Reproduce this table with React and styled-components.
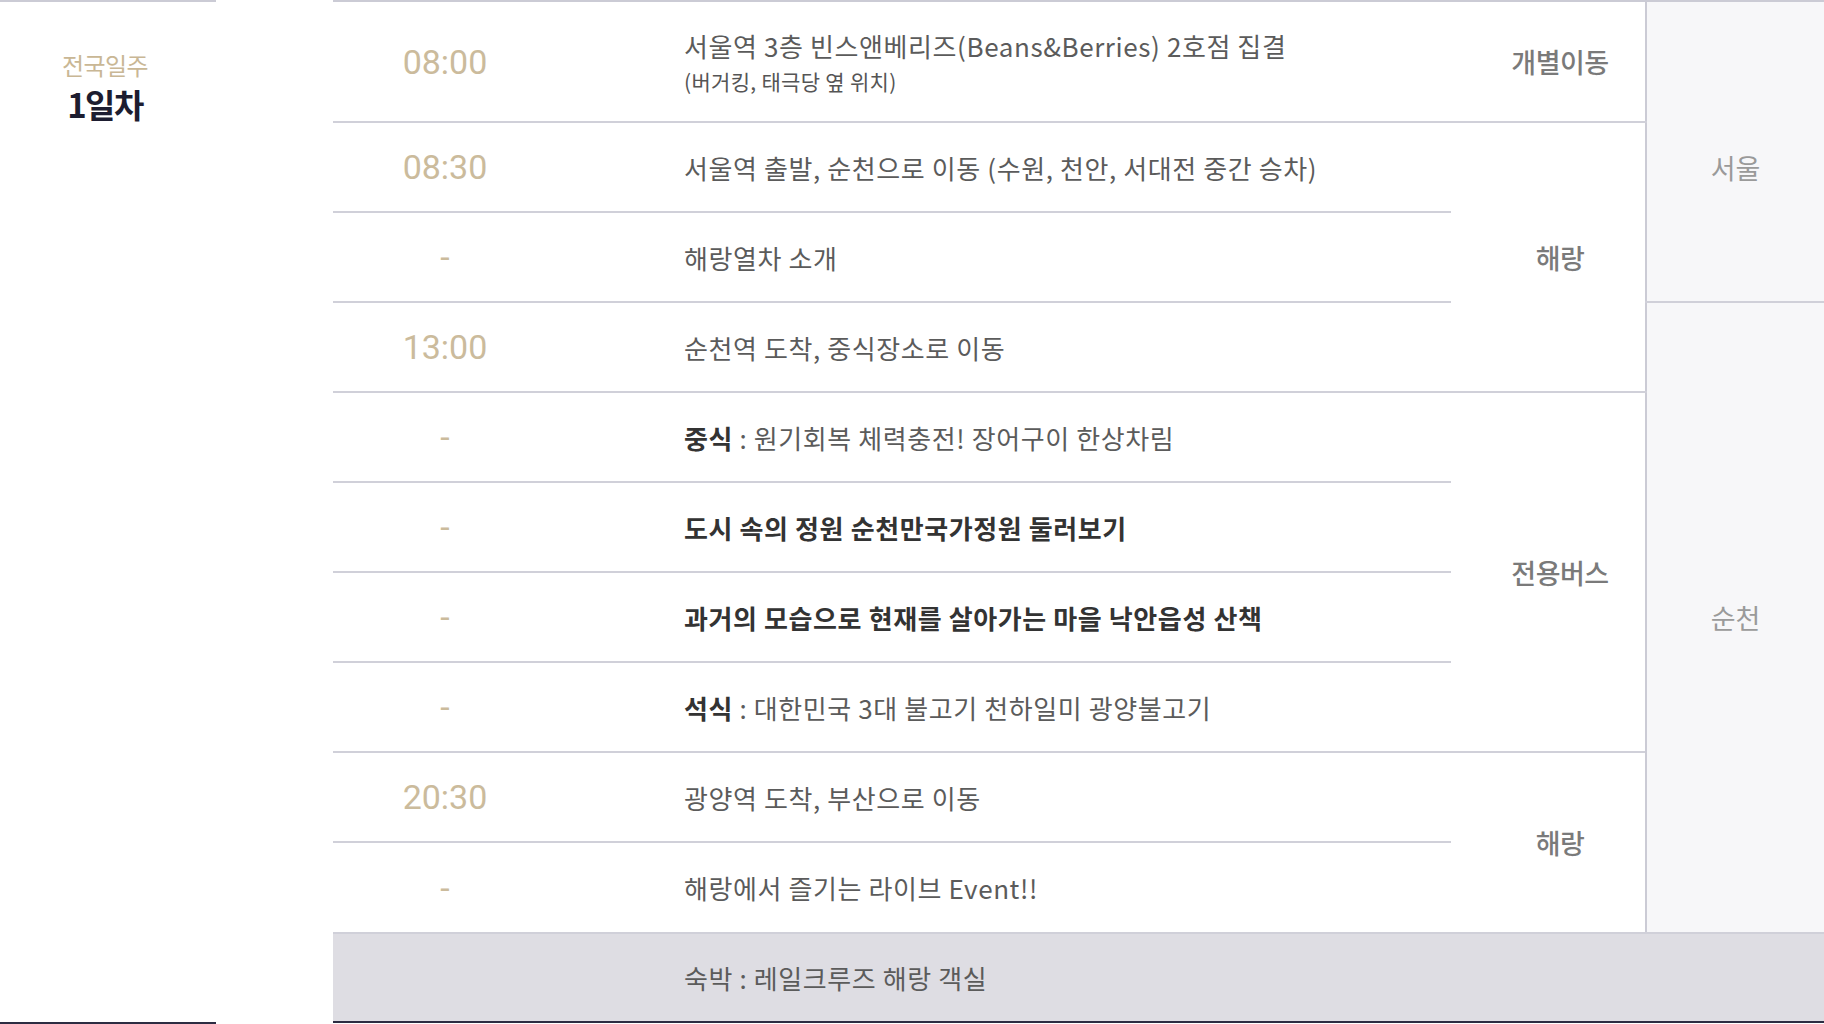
import React from 'react'
import styled, { createGlobalStyle } from 'styled-components'

const GlobalStyle = createGlobalStyle`
    html, body {
        margin: 0;
        padding: 0;
        background: #ffffff;
        overflow: hidden;
    }
    body {
        font-family: "Noto Sans CJK KR", "Noto Sans", sans-serif;
    }
`

const Page = styled.div`
    display: flex;
    width: 1824px;
    height: 1024px;
`

const DayColumn = styled.div`
    width: 216px;
    box-sizing: border-box;
    border-top: 2px solid #cbcbd5;
    border-bottom: 2px solid #2c2c42;
    display: flex;
    flex-direction: column;
    align-items: center;
    padding: 47px 6px 0 0;
`

const DayLabel = styled.div`
    font-size: 24px;
    color: #c9b795;
    letter-spacing: -0.6px;
    line-height: 32px;
`

const DayTitle = styled.div`
    font-size: 33px;
    font-weight: 700;
    color: #1d1d30;
    letter-spacing: -1.5px;
    line-height: 42px;
    margin-top: 2px;
`

const Schedule = styled.div`
    flex: 1;
    margin-left: 117px;
`

const Table = styled.table`
    width: 100%;
    border-collapse: collapse;
    table-layout: fixed;
    border-top: 2px solid #cbcbd5;
    border-bottom: 2px solid #2c2c42;
`

const Row = styled.tr`
    height: ${props => props.h}px;
`

const TimeCell = styled.td`
    width: 224px;
    padding: 0;
    text-align: center;
    vertical-align: middle;
    font-family: Roboto, "Noto Sans", sans-serif;
    font-size: 34px;
    color: #cbbb9c;
    border-bottom: 2px solid #d0d0d9;
`

const DescCell = styled.td`
    padding: 0 0 0 127px;
    vertical-align: middle;
    font-size: 26px;
    color: #5b5b5b;
    letter-spacing: 0.6px;
    border-bottom: 2px solid #d0d0d9;
    font-weight: ${props => (props.bold ? 700 : 400)};
    ${props => props.bold && 'color: #333333;'}
`

const Strong = styled.b`
    font-weight: 700;
    color: #333333;
`

const SubNote = styled.div`
    font-size: 21px;
    letter-spacing: 0.3px;
    color: #555555;
    margin-top: 2px;
`

const TransportCell = styled.td`
    width: 170px;
    padding: 0 0 0 24px;
    text-align: center;
    vertical-align: middle;
    font-size: 27px;
    font-weight: 500;
    color: #7a7a7a;
    letter-spacing: -0.5px;
    border-bottom: 2px solid #d0d0d9;
`

const RegionCell = styled.td`
    width: 177px;
    padding: ${props => props.offset || 0}px 0 0 0;
    text-align: center;
    vertical-align: middle;
    font-size: 27px;
    color: #9a9a9a;
    background: #f7f7f9;
    border-left: 2px solid #cbcbd5;
    border-bottom: 2px solid #d0d0d9;
`

const StayRow = styled.tr`
    height: ${props => props.h}px;
    background: #dedde3;
`

const StayCell = styled.td`
    padding: 0 0 0 351px;
    vertical-align: middle;
    font-size: 26px;
    color: #5b5b5b;
    letter-spacing: 0.6px;
`

const App = () => {
  return (
    <>
      <GlobalStyle />
      <Page>
        <DayColumn>
          <DayLabel>전국일주</DayLabel>
          <DayTitle>1일차</DayTitle>
        </DayColumn>
        <Schedule>
          <Table>
            <tbody>
              <Row h={121}>
                <TimeCell>08:00</TimeCell>
                <DescCell>
                  서울역 3층 빈스앤베리즈(Beans&amp;Berries) 2호점 집결
                  <SubNote>(버거킹, 태극당 옆 위치)</SubNote>
                </DescCell>
                <TransportCell>개별이동</TransportCell>
                <RegionCell rowSpan={3} offset={32}>서울</RegionCell>
              </Row>
              <Row h={90}>
                <TimeCell>08:30</TimeCell>
                <DescCell>서울역 출발, 순천으로 이동 (수원, 천안, 서대전 중간 승차)</DescCell>
                <TransportCell rowSpan={3}>해랑</TransportCell>
              </Row>
              <Row h={90}>
                <TimeCell>-</TimeCell>
                <DescCell>해랑열차 소개</DescCell>
              </Row>
              <Row h={90}>
                <TimeCell>13:00</TimeCell>
                <DescCell>순천역 도착, 중식장소로 이동</DescCell>
                <RegionCell rowSpan={7}>순천</RegionCell>
              </Row>
              <Row h={90}>
                <TimeCell>-</TimeCell>
                <DescCell><Strong>중식</Strong> : 원기회복 체력충전! 장어구이 한상차림</DescCell>
                <TransportCell rowSpan={4}>전용버스</TransportCell>
              </Row>
              <Row h={90}>
                <TimeCell>-</TimeCell>
                <DescCell bold>도시 속의 정원 순천만국가정원 둘러보기</DescCell>
              </Row>
              <Row h={90}>
                <TimeCell>-</TimeCell>
                <DescCell bold>과거의 모습으로 현재를 살아가는 마을 낙안읍성 산책</DescCell>
              </Row>
              <Row h={90}>
                <TimeCell>-</TimeCell>
                <DescCell><Strong>석식</Strong> : 대한민국 3대 불고기 천하일미 광양불고기</DescCell>
              </Row>
              <Row h={90}>
                <TimeCell>20:30</TimeCell>
                <DescCell>광양역 도착, 부산으로 이동</DescCell>
                <TransportCell rowSpan={2}>해랑</TransportCell>
              </Row>
              <Row h={91}>
                <TimeCell>-</TimeCell>
                <DescCell>해랑에서 즐기는 라이브 Event!!</DescCell>
              </Row>
              <StayRow h={89}>
                <StayCell colSpan={4}>숙박 : 레일크루즈 해랑 객실</StayCell>
              </StayRow>
            </tbody>
          </Table>
        </Schedule>
      </Page>
    </>
  )
}

export default App
